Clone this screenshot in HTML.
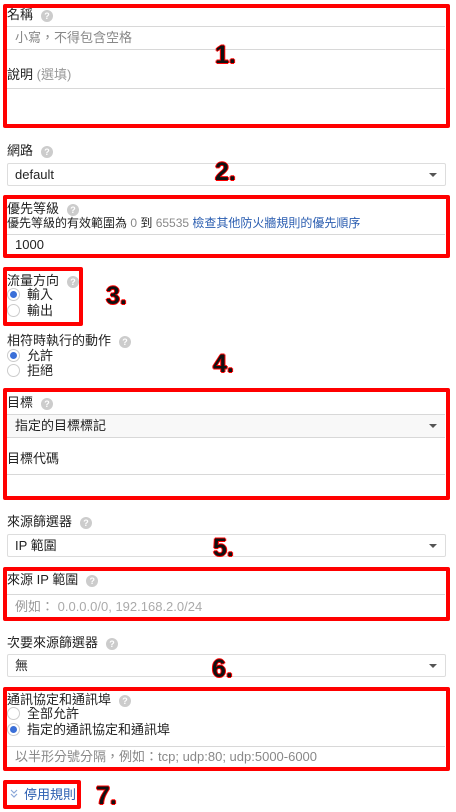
<!DOCTYPE html>
<html><head><meta charset="utf-8"><style>
*{margin:0;padding:0;box-sizing:border-box}
body{width:456px;height:812px;background:#fff;position:relative;overflow:hidden;font-family:"Liberation Sans","Noto Sans CJK TC",sans-serif;font-size:13px;color:#222}
.a{position:absolute;white-space:nowrap;line-height:16px}
.red{position:absolute;border:4px solid #f00;border-radius:2px}
.hl{position:absolute;left:7px;width:438px;height:1px;background:#d8d8d8}
.q{display:inline-block;width:12px;height:12px;border-radius:50%;background:#ccc;color:#fff;font-size:9px;line-height:12px;text-align:center;font-weight:bold;margin-left:8px;vertical-align:0px}
.sel{position:absolute;left:7px;width:439px;height:23px;border:1px solid #ddd;border-radius:2px}
.arr{position:absolute;right:8px;top:9px;width:0;height:0;border-left:4px solid transparent;border-right:4px solid transparent;border-top:4px solid #555}
.r{display:inline-block;width:13px;height:13px;border-radius:50%;border:1px solid #ccc;vertical-align:-2px;margin-right:7px;background:#fff;position:relative}
.r.on::after{content:"";position:absolute;left:2px;top:2px;width:7px;height:7px;border-radius:50%;background:#3a6fd8}
.n{position:absolute;font-weight:900;font-size:25px;color:#111;font-family:"Liberation Sans",sans-serif;text-shadow:1px 0 #f00,-1px 0 #f00,0 1px #f00,0 -1px #f00;line-height:25px}
.g{color:#888}
</style></head><body>
<div class="red" style="left:3px;top:4px;width:447px;height:124px"></div>
<div class="a" style="left:7px;top:7px">名稱<span class="q">?</span></div>
<div class="hl" style="top:26px"></div>
<div class="a g" style="left:15px;top:30px;font-size:13px">小寫，不得包含空格</div>
<div class="hl" style="top:49px"></div>
<div class="a" style="left:7px;top:67px">說明 <span style="color:#999">(選填)</span></div>
<div class="hl" style="top:88px"></div>
<div class="n" style="left:215px;top:43px">1.</div>

<div class="a" style="left:7px;top:143px">網路<span class="q">?</span></div>
<div class="sel" style="top:163px"><div class="a" style="left:7px;top:3px">default</div><div class="arr"></div></div>
<div class="n" style="left:215px;top:160px">2.</div>

<div class="red" style="left:3px;top:195px;width:447px;height:63px"></div>
<div class="a" style="left:7px;top:201px">優先等級<span class="q">?</span></div>
<div class="a" style="left:7px;top:215px;font-size:12px">優先等級的有效範圍為 <span class="g">0</span> 到 <span class="g">65535</span> <span style="color:#2a5db0">檢查其他防火牆規則的優先順序</span></div>
<div class="hl" style="top:234px"></div>
<div class="a" style="left:15px;top:237px">1000</div>

<div class="red" style="left:3px;top:267px;width:80px;height:59px"></div>
<div class="a" style="left:7px;top:273px">流量方向<span class="q">?</span></div>
<div class="a" style="left:7px;top:287px"><span class="r on"></span>輸入</div>
<div class="a" style="left:7px;top:303px"><span class="r"></span>輸出</div>
<div class="n" style="left:106px;top:284px">3.</div>

<div class="a" style="left:7px;top:333px">相符時執行的動作<span class="q">?</span></div>
<div class="a" style="left:7px;top:348px"><span class="r on"></span>允許</div>
<div class="a" style="left:7px;top:363px"><span class="r"></span>拒絕</div>
<div class="n" style="left:213px;top:352px">4.</div>

<div class="red" style="left:3px;top:388px;width:447px;height:112px"></div>
<div class="a" style="left:7px;top:395px">目標<span class="q">?</span></div>
<div class="hl" style="top:414px"></div>
<div style="position:absolute;left:7px;top:415px;width:438px;height:22px;background:#f8f8f8"><div class="a" style="left:8px;top:3px">指定的目標標記</div><div class="arr"></div></div>
<div class="hl" style="top:437px"></div>
<div class="a" style="left:7px;top:451px">目標代碼</div>
<div class="hl" style="top:474px"></div>

<div class="a" style="left:7px;top:514px">來源篩選器<span class="q">?</span></div>
<div class="sel" style="top:534px"><div class="a" style="left:7px;top:3px">IP 範圍</div><div class="arr"></div></div>
<div class="n" style="left:213px;top:536px">5.</div>

<div class="red" style="left:3px;top:567px;width:447px;height:54px"></div>
<div class="a" style="left:7px;top:572px">來源 IP 範圍<span class="q">?</span></div>
<div class="hl" style="top:594px"></div>
<div class="a" style="left:15px;top:599px;color:#999">例如： <span style="color:#aaa">0.0.0.0/0, 192.168.2.0/24</span></div>

<div class="a" style="left:7px;top:635px">次要來源篩選器<span class="q">?</span></div>
<div class="sel" style="top:654px"><div class="a" style="left:7px;top:3px">無</div><div class="arr"></div></div>
<div class="n" style="left:212px;top:657px">6.</div>

<div class="red" style="left:3px;top:687px;width:447px;height:84px"></div>
<div class="a" style="left:7px;top:692px">通訊協定和通訊埠<span class="q">?</span></div>
<div class="a" style="left:7px;top:706px"><span class="r"></span>全部允許</div>
<div class="a" style="left:7px;top:722px"><span class="r on"></span>指定的通訊協定和通訊埠</div>
<div class="hl" style="top:746px"></div>
<div class="a" style="left:15px;top:749px;color:#888">以半形分號分隔，例如：tcp; udp:80; udp:5000-6000</div>

<div class="red" style="left:3px;top:780px;width:78px;height:29px"></div>
<svg style="position:absolute;left:10px;top:789px" width="8" height="10" viewBox="0 0 8 10"><path d="M1 1l3 3 3-3M1 5l3 3 3-3" fill="none" stroke="#8aa7d8" stroke-width="1.2"/></svg>
<div class="a" style="left:24px;top:787px;color:#2a5db0;font-size:13px">停用規則</div>
<div class="n" style="left:96px;top:784px">7.</div>
</body></html>
